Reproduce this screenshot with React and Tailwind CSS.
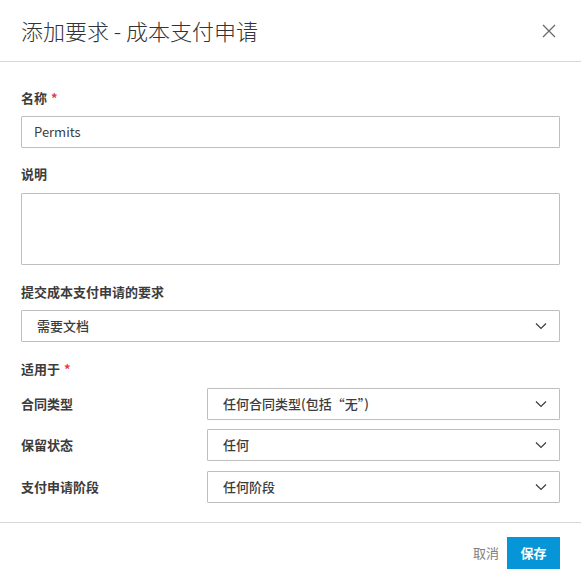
import React from "react";

const font = { fontFamily: '"Noto Sans CJK SC", "Noto Sans", sans-serif' };

function Chevron() {
  return (
    <svg width="12" height="8" viewBox="0 0 12 8" fill="none" className="shrink-0">
      <path d="M1 1.5 L6 6.5 L11 1.5" stroke="#3c3c3c" strokeWidth="1.2" />
    </svg>
  );
}

function Select({ value, className = "" }) {
  return (
    <div className={"h-[32px] border border-[#bfbfbf] rounded-[1px] flex items-center justify-between pl-[15px] pr-[12px] text-[13px] font-medium text-[#3c3c3c] " + className}>
      <span>{value}</span>
      <Chevron />
    </div>
  );
}

function Label({ children, required }) {
  return (
    <div className="h-[18px] leading-[18px] text-[13px] font-semibold text-[#3c3c3c] flex items-center">
      {children}
      {required && <span className="text-[#e63c3c] ml-[4px]">*</span>}
    </div>
  );
}

function Row({ label, value, className = "" }) {
  return (
    <div className={"flex items-center " + className}>
      <div className="w-[186px] text-[13px] font-semibold text-[#3c3c3c]">{label}</div>
      <Select value={value} className="flex-1" />
    </div>
  );
}

export default function App() {
  return (
    <div className="w-[581px] h-[583px] bg-white flex flex-col" style={font}>
      <div className="h-[62px] shrink-0 flex items-center justify-between pl-[21px] pr-[25px] border-b border-[#d9d9d9]">
        <div className="text-[22px] font-light text-[#333333]">添加要求 - 成本支付申请</div>
        <svg width="14" height="14" viewBox="0 0 14 14" fill="none">
          <path d="M1 1 L13 13 M13 1 L1 13" stroke="#6a6a6a" strokeWidth="1.3" />
        </svg>
      </div>
      <div className="px-[21px] pt-[27px] pb-[19px] flex flex-col border-b border-[#d9d9d9]">
        <Label required>名称</Label>
        <div className="mt-[9px] h-[32px] border border-[#bfbfbf] rounded-[1px] flex items-center px-[12px] text-[13px] text-[#3c3c3c]">
          Permits
        </div>
        <div className="mt-[17px]">
          <Label>说明</Label>
        </div>
        <div className="mt-[10px] h-[72px] border border-[#bfbfbf] rounded-[1px]" />
        <div className="mt-[18px]">
          <Label>提交成本支付申请的要求</Label>
        </div>
        <Select value="需要文档" className="mt-[9px]" />
        <div className="mt-[18px]">
          <Label required>适用于</Label>
        </div>
        <Row label="合同类型" value="任何合同类型(包括“无”)" className="mt-[10px]" />
        <Row label="保留状态" value="任何" className="mt-[9px]" />
        <Row label="支付申请阶段" value="任何阶段" className="mt-[10px]" />
      </div>
      <div className="flex items-center justify-end px-[21px] pt-[14px] gap-[8px]">
        <span className="text-[13px] text-[#808080]">取消</span>
        <div className="w-[53px] h-[32px] bg-[#0696d7] flex items-center justify-center text-[13px] font-bold text-white">保存</div>
      </div>
    </div>
  );
}
